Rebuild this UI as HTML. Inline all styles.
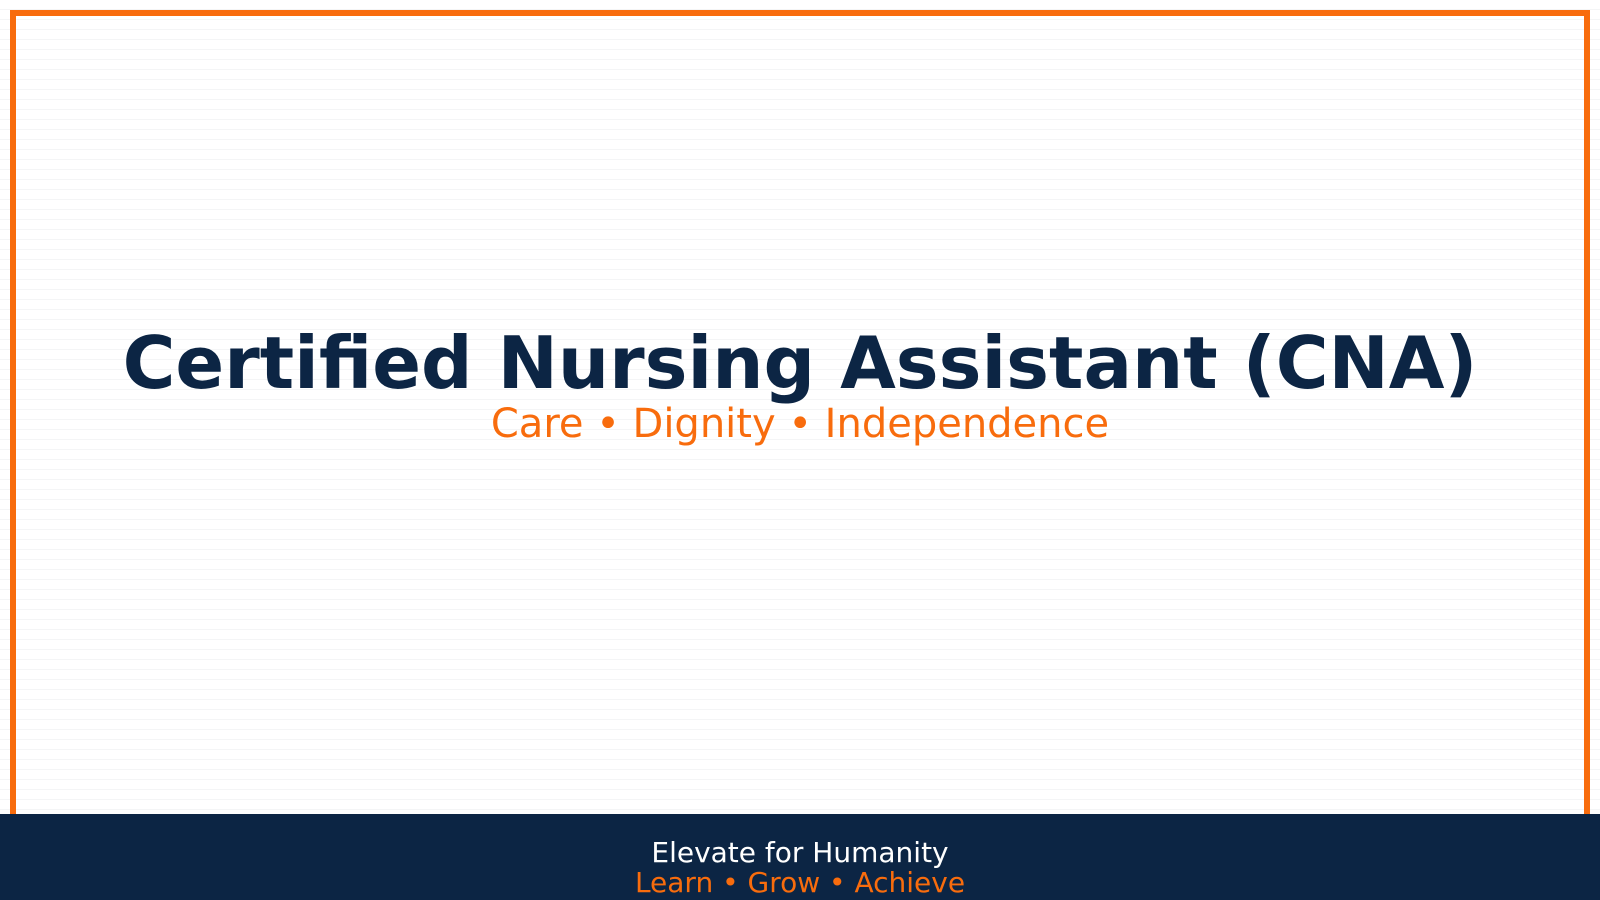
<!DOCTYPE html>
<html><head><style>
html,body{margin:0;padding:0;width:1600px;height:900px;overflow:hidden;font-family:"DejaVu Sans","Liberation Sans",sans-serif;}
body{background:#fff repeating-linear-gradient(to bottom,#fff 0,#fff 9px,#f4f5f6 9px,#f4f5f6 10px);position:relative;}
.frame{position:absolute;left:10px;top:10px;width:1580px;height:820px;box-sizing:border-box;border:6px solid #f86c0d;border-bottom:none;}
.title{position:absolute;left:0;width:1600px;top:318px;text-align:center;font-weight:bold;font-size:72px;line-height:90px;color:#0c2544;}
.sub{position:absolute;left:0;width:1600px;top:398px;text-align:center;font-size:40px;line-height:52px;color:#f86c0d;}
.foot{position:absolute;left:0;top:814px;width:1600px;height:86px;background:#0c2544;text-align:center;}
.f1{position:absolute;left:0;width:1600px;top:22px;font-size:28px;line-height:34px;color:#fff;}
.f2{position:absolute;left:0;width:1600px;top:52px;font-size:28px;line-height:34px;color:#f86c0d;}
</style></head><body>
<div class="frame"></div>
<div class="title">Certified Nursing Assistant (CNA)</div>
<div class="sub">Care • Dignity • Independence</div>
<div class="foot"><div class="f1">Elevate for Humanity</div><div class="f2">Learn • Grow • Achieve</div></div>
</body></html>
